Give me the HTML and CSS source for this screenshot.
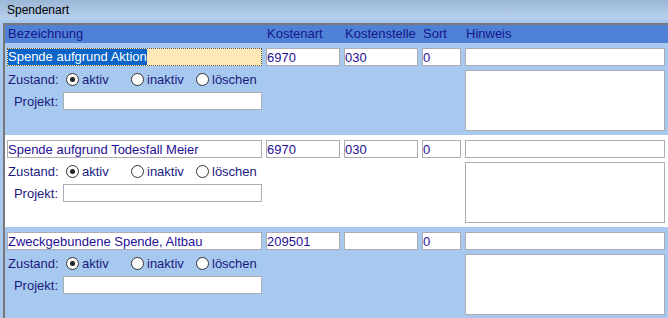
FILE: index.html
```html
<!DOCTYPE html>
<html lang="de">
<head>
	<meta charset="UTF-8">
	<title>Spendenart</title>
	<link rel="stylesheet" href="styles.css">
</head>
<body>
	<div class="titlebar">Spendenart</div>
	<div class="panel">
		<div class="head grid">
			<span>Bezeichnung</span>
			<span>Kostenart</span>
			<span>Kostenstelle</span>
			<span>Sort</span>
			<span>Hinweis</span>
		</div>

		<div class="row grid">
			<div class="main">
				<div class="field focused"><span class="sel">Spende aufgrund Aktion</span></div>
				<div class="state">
					<span class="lbl">Zustand:</span>
					<span class="opt"><i class="radio on"></i>aktiv</span>
					<span class="opt"><i class="radio"></i>inaktiv</span>
					<span class="opt"><i class="radio"></i>löschen</span>
				</div>
				<div class="project"><span class="lbl">Projekt:</span><input class="field" value=""></div>
			</div>
			<input class="field" value="6970">
			<input class="field" value="030">
			<input class="field" value="0">
			<div class="note"><input class="field" value=""><textarea class="memo"></textarea></div>
		</div>

		<div class="row alt grid">
			<div class="main">
				<input class="field" value="Spende aufgrund Todesfall Meier">
				<div class="state">
					<span class="lbl">Zustand:</span>
					<span class="opt"><i class="radio on"></i>aktiv</span>
					<span class="opt"><i class="radio"></i>inaktiv</span>
					<span class="opt"><i class="radio"></i>löschen</span>
				</div>
				<div class="project"><span class="lbl">Projekt:</span><input class="field" value=""></div>
			</div>
			<input class="field" value="6970">
			<input class="field" value="030">
			<input class="field" value="0">
			<div class="note"><input class="field" value=""><textarea class="memo"></textarea></div>
		</div>

		<div class="row grid">
			<div class="main">
				<input class="field" value="Zweckgebundene Spende, Altbau">
				<div class="state">
					<span class="lbl">Zustand:</span>
					<span class="opt"><i class="radio on"></i>aktiv</span>
					<span class="opt"><i class="radio"></i>inaktiv</span>
					<span class="opt"><i class="radio"></i>löschen</span>
				</div>
				<div class="project"><span class="lbl">Projekt:</span><input class="field" value=""></div>
			</div>
			<input class="field" value="209501">
			<input class="field" value="">
			<input class="field" value="0">
			<div class="note"><input class="field" value=""><textarea class="memo"></textarea></div>
		</div>
	</div>
</body>
</html>
```

FILE: styles.css
```css
body{
	margin: 0;
	background: #a8c8ee;
	font: 13px "Liberation Sans", Arial, sans-serif;
	color: #1a1a80;
	overflow: hidden;
}
.titlebar{
	height: 20px;
	line-height: 20px;
	padding-left: 7px;
	font-size: 12px;
	color: #000;
	background: linear-gradient(#9cb7d6, #b8d2ee);
}
.panel{
	margin: 3px 0 0 3px;
	border-top: 2px solid #787878;
	border-left: 2px solid #787878;
}
.grid{
	display: grid;
	grid-template-columns: 255px 74px 74px 39px 200px;
	column-gap: 4px;
	padding-left: 2px;
}
.head{
	height: 18px;
	line-height: 18px;
	background: #4f81d7;
	color: #16168c;
}
.head span{
	padding-left: 1px;
}
.row{
	height: 92px;
	box-sizing: border-box;
	padding-top: 5px;
	background: #a7c9ef;
	align-items: start;
}
.row.alt{
	background: #fff;
}
.field{
	display: block;
	box-sizing: border-box;
	width: 100%;
	height: 18px;
	margin: 0;
	padding: 0;
	border: 1px solid #abadb3;
	background: #fff;
	font: inherit;
	line-height: 16px;
	color: #1f0f96;
	outline: none;
}
.focused{
	background: #fee8b6;
	border: 1px dotted #555;
}
.sel{
	display: inline-block;
	height: 16px;
	background: #0b65c9;
	color: #fff;
}
.main{
	display: flex;
	flex-direction: column;
}
.state{
	display: flex;
	align-items: center;
	height: 18px;
	margin-top: 4px;
}
.state .lbl{
	width: 58px;
	padding-left: 1px;
}
.opt{
	display: flex;
	align-items: center;
	width: 65px;
}
.radio{
	display: flex;
	align-items: center;
	justify-content: center;
	box-sizing: border-box;
	width: 13px;
	height: 13px;
	margin-right: 3px;
	border: 1px solid #333;
	border-radius: 50%;
	background: #fff;
}
.radio.on::after{
	content: "";
	width: 5px;
	height: 5px;
	border-radius: 50%;
	background: #222;
}
.project{
	display: flex;
	align-items: center;
	margin-top: 4px;
}
.project .lbl{
	width: 51px;
	margin-right: 5px;
	text-align: right;
}
.project .field{
	width: 199px;
}
.note{
	display: flex;
	flex-direction: column;
	gap: 4px;
}
.memo{
	display: block;
	box-sizing: border-box;
	height: 61px;
	margin: 0;
	border: 1px solid #abadb3;
	resize: none;
	outline: none;
}
```
